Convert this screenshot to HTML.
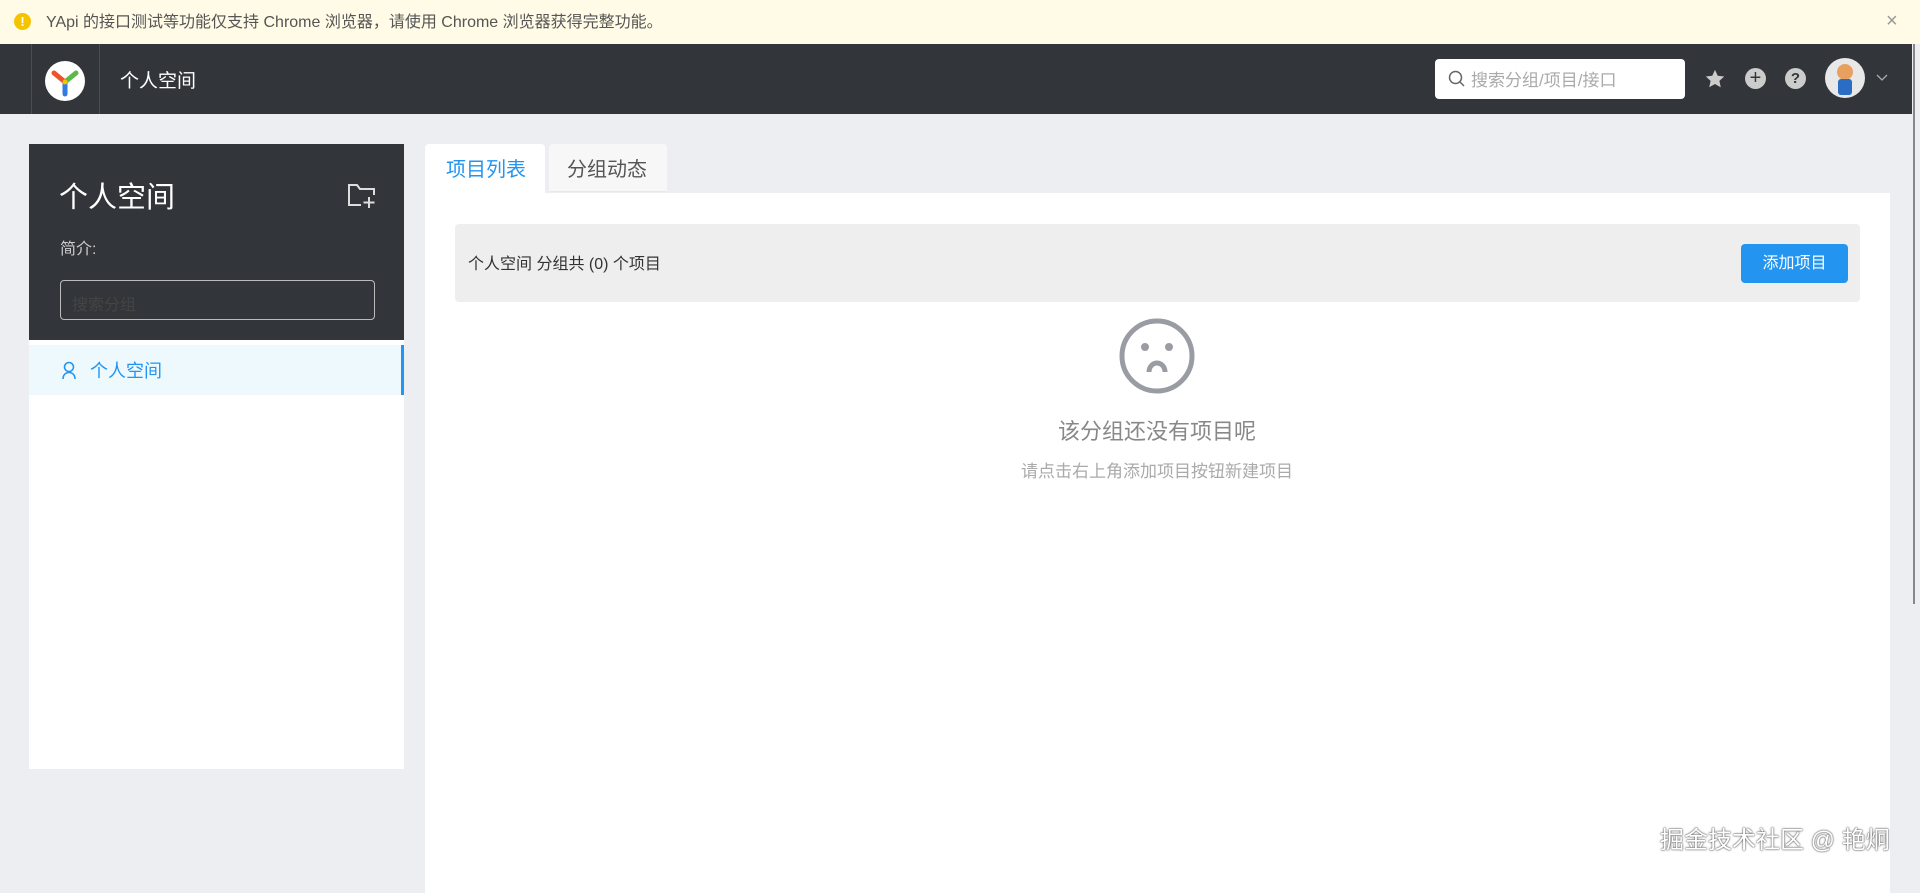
<!DOCTYPE html>
<html><head><meta charset="utf-8"><style>
*{box-sizing:border-box;margin:0;padding:0}
body{width:1920px;height:879px;overflow:hidden;background:#eceef1;font-family:"Liberation Sans","Noto Sans CJK SC",sans-serif;position:relative}
.abs{position:absolute}
</style></head><body>
<div class="abs" style="left:0;top:0;width:1920px;height:44px;background:#fffbe6"></div>
<div class="abs" style="left:14px;top:13px;width:17px;height:17px;border-radius:50%;background:#f5c400;color:#fff;font-size:13px;line-height:17px;text-align:center;font-weight:bold">!</div>
<div class="abs" style="left:46px;top:13px;font-size:16px;color:#555;line-height:20px">YApi 的接口测试等功能仅支持 Chrome 浏览器，请使用 Chrome 浏览器获得完整功能。</div>
<div class="abs" style="left:1886px;top:10px;font-size:20px;color:#999">×</div>
<div class="abs" style="left:0;top:44px;width:1912px;height:70px;background:#32363a"></div>
<div class="abs" style="left:31px;top:44px;width:1px;height:70px;background:#4a4e53"></div>
<div class="abs" style="left:99px;top:44px;width:1px;height:70px;background:#4a4e53"></div>
<svg class="abs" style="left:45px;top:61px" width="40" height="40" viewBox="0 0 40 40"><circle cx="20" cy="20" r="20" fill="#fff"/><path d="M20 21 L9 12" stroke="#f0522a" stroke-width="5" stroke-linecap="round"/><path d="M20 21 L31 12" stroke="#5bb94a" stroke-width="5" stroke-linecap="round"/><path d="M20 21 L20 33" stroke="#2f7de1" stroke-width="5" stroke-linecap="round"/><circle cx="20" cy="21" r="2.5" fill="#f5c400"/></svg>
<div class="abs" style="left:120px;top:70px;font-size:19px;color:#fff;line-height:24px">个人空间</div>
<div class="abs" style="left:1435px;top:59px;width:250px;height:40px;background:#fff;border-radius:4px"></div>
<svg class="abs" style="left:1448px;top:70px" width="18" height="18" viewBox="0 0 18 18"><circle cx="7.5" cy="7.5" r="6" fill="none" stroke="#666" stroke-width="1.5"/><path d="M12 12 L16 16" stroke="#666" stroke-width="1.5"/></svg>
<div class="abs" style="left:1471px;top:70px;font-size:17px;color:#aaa;line-height:21px">搜索分组/项目/接口</div>
<svg class="abs" style="left:1704px;top:68px" width="22" height="22" viewBox="0 0 24 24"><path d="M12 2l3 6.5 7 .8-5.2 4.8 1.5 7L12 17.5 5.7 21l1.5-7L2 9.3l7-.8z" fill="#ccc"/></svg>
<div class="abs" style="left:1745px;top:68px;width:21px;height:21px;border-radius:50%;background:#ccc;color:#32363a;font-size:20px;line-height:20px;text-align:center">+</div>
<div class="abs" style="left:1785px;top:68px;width:21px;height:21px;border-radius:50%;background:#ccc;color:#32363a;font-size:15px;line-height:21px;text-align:center;font-weight:bold">?</div>
<div class="abs" style="left:1825px;top:58px;width:40px;height:40px;border-radius:50%;background:#e8e8e8;overflow:hidden"><div style="position:absolute;left:12px;top:6px;width:16px;height:16px;border-radius:50%;background:#e8a060"></div><div style="position:absolute;left:13px;top:21px;width:14px;height:16px;background:#2b6cc4;border-radius:3px"></div></div>
<svg class="abs" style="left:1876px;top:74px" width="12" height="8" viewBox="0 0 12 8"><path d="M1 1l5 5 5-5" fill="none" stroke="#aaa" stroke-width="1.3"/></svg>
<div class="abs" style="left:1913px;top:44px;width:2px;height:560px;background:#888"></div>
<div class="abs" style="left:29px;top:144px;width:375px;height:625px;background:#fff"></div>
<div class="abs" style="left:29px;top:144px;width:375px;height:196px;background:#32363a"></div>
<div class="abs" style="left:59px;top:180px;font-size:29px;color:#fff;line-height:36px">个人空间</div>
<svg class="abs" style="left:347px;top:182px" width="30" height="28" viewBox="0 0 30 28"><path d="M14 23H2V3h8l3 4h14v6" fill="none" stroke="#ddd" stroke-width="2"/><path d="M22 15v11M16.5 20.5h11" stroke="#ddd" stroke-width="2"/></svg>
<div class="abs" style="left:60px;top:240px;font-size:16px;color:#ccc;line-height:20px">简介:</div>
<div class="abs" style="left:60px;top:280px;width:315px;height:40px;border:1px solid #bbb;border-radius:4px"></div>
<div class="abs" style="left:72px;top:291px;font-size:16px;color:#444">搜索分组</div>
<div class="abs" style="left:29px;top:345px;width:375px;height:50px;background:#eef9fd;border-right:3px solid #2395f1"></div>
<svg class="abs" style="left:61px;top:361px" width="16" height="20" viewBox="0 0 16 20"><circle cx="8" cy="6" r="4.5" fill="none" stroke="#2395f1" stroke-width="1.6"/><path d="M2 18c0-4 2.5-6.5 6-6.5s6 2.5 6 6.5" fill="none" stroke="#2395f1" stroke-width="1.6"/></svg>
<div class="abs" style="left:90px;top:360px;font-size:18px;color:#2395f1;line-height:22px">个人空间</div>
<div class="abs" style="left:425px;top:144px;width:120px;height:50px;background:#fff;border-radius:4px 4px 0 0"></div>
<div class="abs" style="left:446px;top:158px;font-size:20px;color:#2395f1;line-height:24px">项目列表</div>
<div class="abs" style="left:549px;top:144px;width:118px;height:48px;background:#f7f7f7;border-radius:4px 4px 0 0;border-bottom:1px solid #e8e8e8"></div>
<div class="abs" style="left:567px;top:158px;font-size:20px;color:#555;line-height:24px">分组动态</div>
<div class="abs" style="left:425px;top:193px;width:1465px;height:700px;background:#fff"></div>
<div class="abs" style="left:455px;top:224px;width:1405px;height:78px;background:#eeeeee;border-radius:4px"></div>
<div class="abs" style="left:468px;top:255px;font-size:16px;color:#333;line-height:20px">个人空间 分组共 (0) 个项目</div>
<div class="abs" style="left:1741px;top:244px;width:107px;height:39px;background:#2395f1;border-radius:4px;color:#fff;font-size:16px;line-height:39px;text-align:center">添加项目</div>
<svg class="abs" style="left:1119px;top:318px" width="76" height="76" viewBox="0 0 76 76"><circle cx="38" cy="38" r="35" fill="none" stroke="#9a9ca3" stroke-width="5"/><circle cx="26" cy="29" r="4" fill="#9a9ca3"/><circle cx="50" cy="29" r="4" fill="#9a9ca3"/><path d="M30 54a8 9 0 0 1 16 0" fill="none" stroke="#9a9ca3" stroke-width="5"/></svg>
<div class="abs" style="left:957px;top:418px;width:400px;text-align:center;font-size:22px;color:#888;line-height:28px">该分组还没有项目呢</div>
<div class="abs" style="left:957px;top:461px;width:400px;text-align:center;font-size:17px;color:#aaa;line-height:22px">请点击右上角添加项目按钮新建项目</div>
<div class="abs" style="left:1660px;top:826px;font-size:24px;color:#fff;line-height:30px;text-shadow:0 0 2px #555,0 0 1px #333">掘金技术社区 @ 艳炯</div>
</body></html>
